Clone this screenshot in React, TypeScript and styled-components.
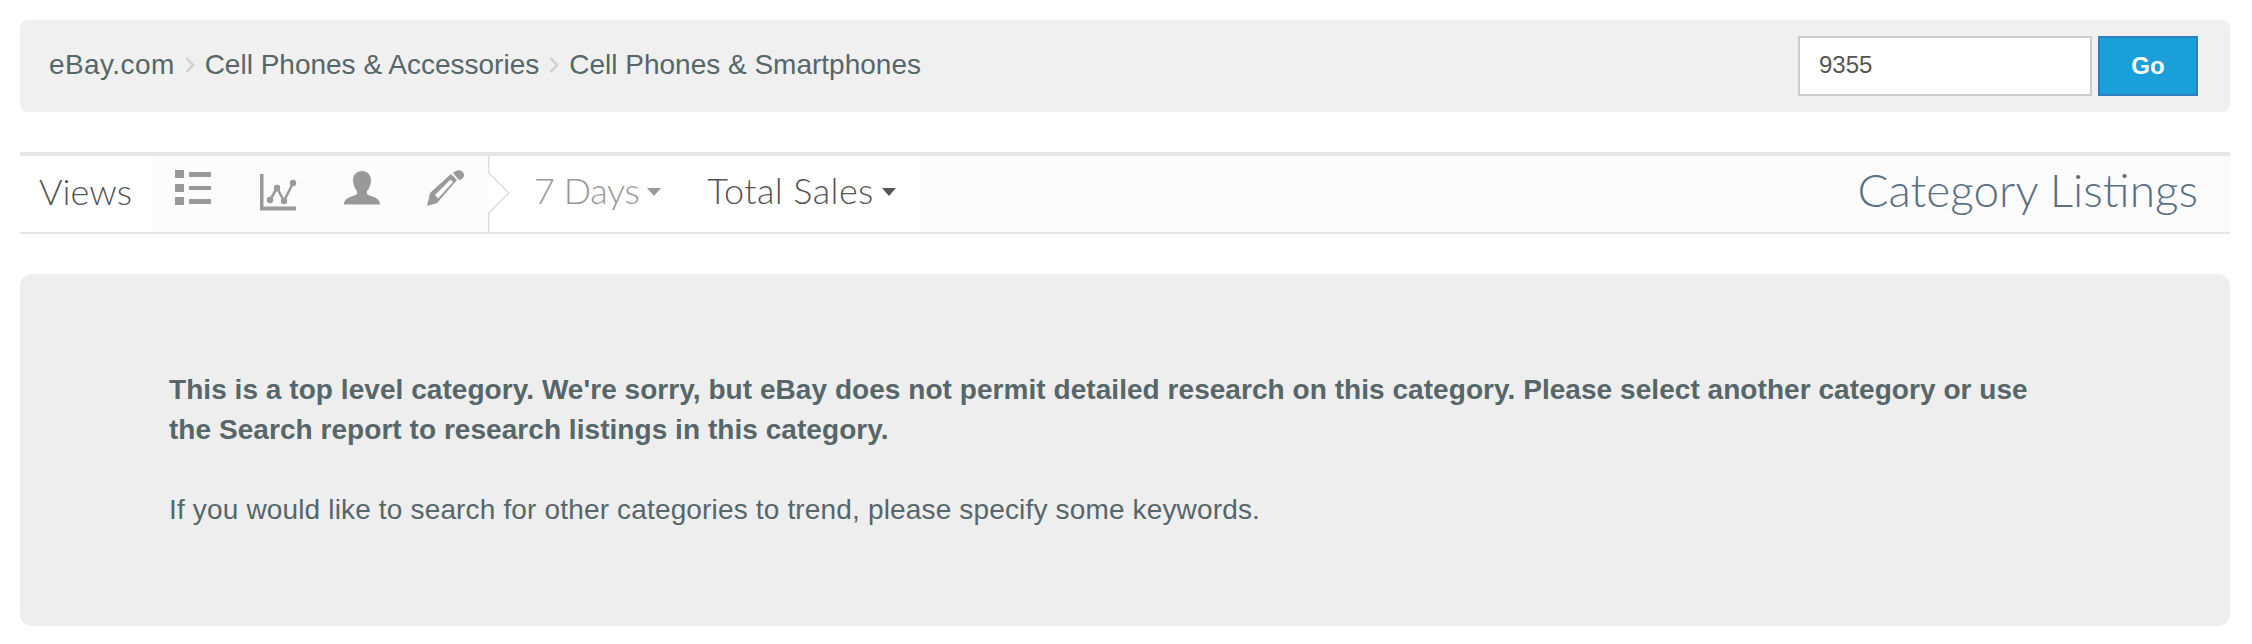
import React from 'react'
import styled, { createGlobalStyle } from 'styled-components'

const GlobalStyle = createGlobalStyle`
  html, body {
    margin: 0;
    padding: 0;
    background: #fff;
  }
`

const ListIcon = () => (
    <svg width="38" height="36" viewBox="0 0 38 36" fill="#999">
        <rect x="0" y="0" width="9" height="8" />
        <rect x="0" y="14" width="9" height="8" />
        <rect x="0" y="27" width="9" height="8" />
        <rect x="14" y="2" width="22" height="5" />
        <rect x="14" y="16" width="22" height="4" />
        <rect x="14" y="29" width="22" height="5" />
    </svg>
)

const ChartIcon = () => (
    <svg width="37" height="41" viewBox="0 -4 37 41" fill="#999">
        <path d="M0 0h3.500v32.500h32.500v4H0z" />
        <path d="M10 26l7-12 7 13 9-18" fill="none" stroke="#999" strokeWidth="2.500" />
        <circle cx="10" cy="26" r="3.200" />
        <circle cx="17" cy="14" r="3.200" />
        <circle cx="24" cy="27" r="3.200" />
        <circle cx="33" cy="9" r="3.200" />
    </svg>
)

const PersonIcon = () => (
    <svg width="36" height="35" viewBox="0 -1 36 35" fill="#999">
        <path d="M18 0c5.500 0 9 4 9 9.500 0 4.500-2 8-4 10.500v3c2 2.500 13 2.500 13 10.500H0c0-8 11-8 13-10.500v-3c-2-2.500-4-6-4-10.500C9 4 12.500 0 18 0z" />
    </svg>
)

const PencilIcon = () => (
    <svg width="38" height="37" viewBox="0 0 38 37" fill="#999">
        <path d="M26 3c2-2 5-3 7-2.500 3 .5 4.500 3.500 4 5.500-.5 2-3 4-5 4z" />
        <path fillRule="evenodd" d="M0 36l3-13L24 4l6 6-20 23zM8 25l3 3.500L26 12l-2.500-2.500z" />
    </svg>
)

const Chevron = () => (
    <ChevronSvg width="22" height="76" viewBox="0 0 22 76">
        <path d="M.75 0v17l20 20-20 20v19" fill="none" stroke="#ddd" strokeWidth="1.500" />
    </ChevronSvg>
)

const CrumbArrow = () => (
    <SeparatorSvg width="10" height="16" viewBox="0 0 10 16">
        <path d="M1.500 1l6.500 7-6.500 7" fill="none" stroke="#cfcfcf" strokeWidth="2.500" />
    </SeparatorSvg>
)

export default function App() {
    return (
        <Page>
            <GlobalStyle />
            <Breadcrumb>
                <Crumbs>
                    <Crumb $tracked>eBay.com</Crumb>
                    <CrumbArrow />
                    <Crumb>Cell Phones &amp; Accessories</Crumb>
                    <CrumbArrow />
                    <Crumb>Cell Phones &amp; Smartphones</Crumb>
                </Crumbs>
                <SearchForm>
                    <SearchInput defaultValue="9355" />
                    <GoButton>Go</GoButton>
                </SearchForm>
            </Breadcrumb>

            <Toolbar>
                <ViewsLabel>Views</ViewsLabel>
                <IconGroup>
                    <IconButton><ListIcon /></IconButton>
                    <IconButton><ChartIcon /></IconButton>
                    <IconButton><PersonIcon /></IconButton>
                    <IconButton><PencilIcon /></IconButton>
                </IconGroup>
                <Chevron />
                <Filters>
                    <Filter $muted>7 Days<Caret $muted /></Filter>
                    <Filter>Total Sales<Caret /></Filter>
                </Filters>
                <Title>Category Listings</Title>
            </Toolbar>

            <Panel>
                <Message $bold>
                    This is a top level category. We're sorry, but eBay does not permit detailed research on this category. Please select another category or use the Search report to research listings in this category.
                </Message>
                <Message>
                    If you would like to search for other categories to trend, please specify some keywords.
                </Message>
            </Panel>
        </Page>
    )
}

const Page = styled.div`
    width: 2252px;
    height: 644px;
    box-sizing: border-box;
    padding: 20px 22px 0 20px;
    overflow: hidden;
    font-family: "Liberation Sans", Arial, sans-serif;
    color: #566669;
`

const Breadcrumb = styled.div`
    display: flex;
    align-items: center;
    justify-content: space-between;
    height: 92px;
    box-sizing: border-box;
    padding: 0 32px 0 29px;
    background: #f0f0f0;
    border-radius: 8px;
`

const Crumbs = styled.div`
    display: flex;
    align-items: center;
    margin-top: -2px;
    font-size: 28px;
`

const Crumb = styled.span<{ $tracked?: boolean }>`
    color: #566669;
    letter-spacing: ${({ $tracked }) => ($tracked ? '0.4px' : '0')};
`

const SeparatorSvg = styled.svg`
    flex: none;
    margin: 0 10px;
`

const SearchForm = styled.div`
    display: flex;
    gap: 6px;
`

const SearchInput = styled.input`
    width: 294px;
    height: 60px;
    box-sizing: border-box;
    padding: 0 19px 2px;
    background: #fff;
    border: 2px solid #cccccc;
    border-radius: 0;
    outline: none;
    color: #555;
    font-family: inherit;
    font-size: 24px;
`

const GoButton = styled.button`
    width: 100px;
    height: 60px;
    padding: 0;
    background: #1a9fd8;
    border: 2px solid #2d7fbd;
    border-radius: 0;
    color: #fff;
    font-family: inherit;
    font-size: 24px;
    font-weight: 700;
`

const Toolbar = styled.div`
    display: flex;
    align-items: stretch;
    height: 82px;
    margin-top: 40px;
    box-sizing: border-box;
    background: #fff;
    border-top: 4px solid #e6e6e6;
    border-bottom: 2px solid #e6e6e6;
    font-family: Lato, sans-serif;
    font-weight: 300;
`

const ViewsLabel = styled.div`
    display: flex;
    align-items: center;
    width: 132px;
    box-sizing: border-box;
    padding: 0 0 6px 19px;
    font-size: 36px;
    color: #555;
`

const IconGroup = styled.div`
    display: flex;
    width: 336px;
    background: #fcfcfc;
`

const IconButton = styled.div`
    display: flex;
    align-items: flex-start;
    justify-content: center;
    width: 84px;
    padding-top: 14px;
    box-sizing: border-box;
`

const ChevronSvg = styled.svg`
    flex: none;
`

const Filters = styled.div`
    display: flex;
    align-items: center;
    gap: 46px;
    width: 410px;
    box-sizing: border-box;
    padding: 0 0 8px 24px;
`

const Filter = styled.div<{ $muted?: boolean }>`
    display: flex;
    align-items: center;
    font-size: 36px;
    letter-spacing: ${({ $muted }) => ($muted ? '-0.4px' : '0.4px')};
    color: ${({ $muted }) => ($muted ? '#999' : '#555')};
`

const Caret = styled.span<{ $muted?: boolean }>`
    width: 0;
    height: 0;
    margin: 4px 0 0 8px;
    border-top: 8px solid ${({ $muted }) => ($muted ? '#999' : '#555')};
    border-left: 7px solid transparent;
    border-right: 7px solid transparent;
`

const Title = styled.div`
    flex: 1;
    display: flex;
    align-items: center;
    justify-content: flex-end;
    padding: 0 32px 10px 0;
    background: #fcfcfc;
    font-size: 46px;
    color: #5a6f84;
`

const Panel = styled.div`
    height: 352px;
    margin-top: 40px;
    box-sizing: border-box;
    padding: 96px 190px 0 149px;
    background: #eeeeee;
    border-radius: 12px;
`

const Message = styled.p<{ $bold?: boolean }>`
    margin: 0 0 40px;
    font-size: 28px;
    line-height: 40px;
    letter-spacing: ${({ $bold }) => ($bold ? '0.05px' : '0.16px')};
    font-weight: ${({ $bold }) => ($bold ? 700 : 400)};
    color: #566669;
`
